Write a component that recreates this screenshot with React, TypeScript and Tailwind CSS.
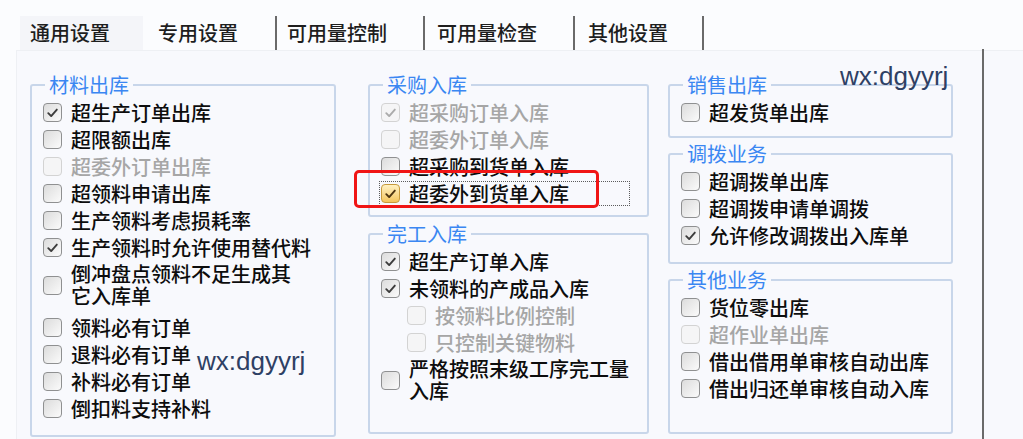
import React from 'react';

type Option = {
  label: string | string[];
  checked?: boolean;
  disabled?: boolean;
  indent?: boolean;
  hot?: boolean;
};

type Group = {
  title: string;
  height: string;
  gap?: string;
  options: Option[];
};

function Tick({ color }: { color: string }) {
  return (
    <svg viewBox="0 0 18 18" className="h-[18px] w-[18px]">
      <path d="M4.5 9.2 L7.6 12.3 L13.6 5.4" fill="none" stroke={color} strokeWidth="2" strokeLinecap="round" strokeLinejoin="round" />
    </svg>
  );
}

function CheckBox({ checked, disabled, hot }: { checked?: boolean; disabled?: boolean; hot?: boolean }) {
  let frame = 'border-[#8f9091] bg-linear-to-br from-[#dcdcdc] to-[#fbfbfb]';
  let tick = '#3c3c3c';
  if (hot) {
    frame = 'border-[#c79a3c] bg-linear-to-b from-[#fff1c2] to-[#f4c55a]';
    tick = '#4d3410';
  } else if (disabled) {
    frame = 'border-[#d3d3d3] bg-[#f5f5f6]';
    tick = '#ababab';
  }
  return (
    <span className={`flex h-[19px] w-[19px] shrink-0 items-center justify-center rounded-[4px] border ${frame}`}>
      {checked && <Tick color={tick} />}
    </span>
  );
}

function Row({ option }: { option: Option }) {
  const text = option.disabled ? 'text-[#a6a6a6]' : 'text-[#0d0d0d]';
  const indent = option.indent ? 'ml-[26px]' : '';

  if (Array.isArray(option.label)) {
    return (
      <div className={`flex items-center gap-[9px] pt-[2px] pb-[7px] ${indent}`}>
        <CheckBox checked={option.checked} disabled={option.disabled} />
        <div className={`flex flex-col ${text}`}>
          {option.label.map((line) => (
            <span key={line} className="h-[22px] overflow-visible leading-[22px]">
              {line}
            </span>
          ))}
        </div>
      </div>
    );
  }

  return (
    <div className={`relative flex h-[27px] items-center gap-[9px] ${indent}`}>
      <CheckBox checked={option.checked} disabled={option.disabled} hot={option.hot} />
      <span className={`leading-[27px] whitespace-nowrap ${text}`}>{option.label}</span>
      {option.hot && (
        <>
          <div className="absolute left-[-2px] top-[1px] h-[25px] w-[251px] border border-dotted border-[#5c5c5c]" />
          <div className="absolute left-[-27px] top-[-10px] h-[38px] w-[245px] rounded-[5px] border-[3px] border-[#f01515]" />
        </>
      )}
    </div>
  );
}

function GroupBox({ group }: { group: Group }) {
  return (
    <fieldset className={`rounded-[3px] border-2 border-[#c8d6ea] ${group.height} ${group.gap ?? ''}`}>
      <legend className="ml-[13px] px-[4px] text-[20px] leading-[24px] font-normal text-[#3b87f2]">{group.title}</legend>
      <div className="flex flex-col pl-[11px] pt-[2px]">
        {group.options.map((o, i) => (
          <Row key={i} option={o} />
        ))}
      </div>
    </fieldset>
  );
}

const columnOne: Group[] = [
  {
    title: '材料出库',
    height: 'h-[364px]',
    options: [
      { label: '超生产订单出库', checked: true },
      { label: '超限额出库' },
      { label: '超委外订单出库', disabled: true },
      { label: '超领料申请出库' },
      { label: '生产领料考虑损耗率' },
      { label: '生产领料时允许使用替代料', checked: true },
      { label: ['倒冲盘点领料不足生成其', '它入库单'] },
      { label: '领料必有订单' },
      { label: '退料必有订单' },
      { label: '补料必有订单' },
      { label: '倒扣料支持补料' },
    ],
  },
];

const columnTwo: Group[] = [
  {
    title: '采购入库',
    height: 'h-[144px]',
    options: [
      { label: '超采购订单入库', checked: true, disabled: true },
      { label: '超委外订单入库', disabled: true },
      { label: '超采购到货单入库' },
      { label: '超委外到货单入库', checked: true, hot: true },
    ],
  },
  {
    title: '完工入库',
    height: 'h-[212px]',
    gap: 'mt-[5px]',
    options: [
      { label: '超生产订单入库', checked: true },
      { label: '未领料的产成品入库', checked: true },
      { label: '按领料比例控制', indent: true, disabled: true },
      { label: '只控制关键物料', indent: true, disabled: true },
      { label: ['严格按照末级工序完工量', '入库'] },
    ],
  },
];

const columnThree: Group[] = [
  {
    title: '销售出库',
    height: 'h-[65px]',
    options: [{ label: '超发货单出库' }],
  },
  {
    title: '调拨业务',
    height: 'h-[122px]',
    gap: 'mt-[4px]',
    options: [
      { label: '超调拨单出库' },
      { label: '超调拨申请单调拨' },
      { label: '允许修改调拨出入库单', checked: true },
    ],
  },
  {
    title: '其他业务',
    height: 'h-[166px]',
    gap: 'mt-[4px]',
    options: [
      { label: '货位零出库' },
      { label: '超作业单出库', disabled: true },
      { label: '借出借用单审核自动出库' },
      { label: '借出归还单审核自动入库' },
    ],
  },
];

const tabs = [
  { label: '通用设置', cls: 'w-[123px] pl-[10px] bg-[#f4f5f9]' },
  { label: '专用设置', cls: 'w-[134px] pl-[15px] border-r-2 border-[#6a6a6a]' },
  { label: '可用量控制', cls: 'w-[148px] pl-[10px] border-r-2 border-[#6a6a6a]' },
  { label: '可用量检查', cls: 'w-[150px] pl-[12px] border-r-2 border-[#6a6a6a]' },
  { label: '其他设置', cls: 'w-[129px] pl-[13px] border-r-2 border-[#6a6a6a]' },
];

export default function App() {
  return (
    <div className="relative flex h-[439px] w-[1023px] flex-col overflow-hidden bg-[#fbfcfe] font-['Noto_Sans_CJK_SC','Noto_Sans',sans-serif] text-[20px] font-medium">
      {/* tab strip */}
      <div className="flex h-[50px] shrink-0 items-start pl-[20px] pt-[16px]">
        {tabs.map((t) => (
          <div key={t.label} className={`flex h-[34px] items-center text-[#1e1e1e] ${t.cls}`}>
            {t.label}
          </div>
        ))}
      </div>

      {/* page body */}
      <div className="ml-[16px] flex flex-1 border-l border-t border-[#eef0f4] bg-[#f8f9fd]">
        <div className="flex pl-[13px] pt-[22px]">
          <div className="flex w-[306px] flex-col">
            {columnOne.map((g) => (
              <GroupBox key={g.title} group={g} />
            ))}
          </div>
          <div className="ml-[32px] flex w-[281px] flex-col">
            {columnTwo.map((g) => (
              <GroupBox key={g.title} group={g} />
            ))}
          </div>
          <div className="ml-[19px] flex w-[285px] flex-col">
            {columnThree.map((g) => (
              <GroupBox key={g.title} group={g} />
            ))}
          </div>
        </div>
        <div className="ml-[29px] -mt-[2px] w-[2px] bg-[#6a6a6a]" />
      </div>

      {/* watermark */}
      <span className="absolute left-[197px] top-[348px] font-['Liberation_Sans',sans-serif] text-[26px] font-normal leading-none text-[#2e4064]">
        wx:dgyyrj
      </span>
      <span className="absolute left-[840px] top-[63px] font-['Liberation_Sans',sans-serif] text-[26px] font-normal leading-none text-[#2e4064]">
        wx:dgyyrj
      </span>
    </div>
  );
}
